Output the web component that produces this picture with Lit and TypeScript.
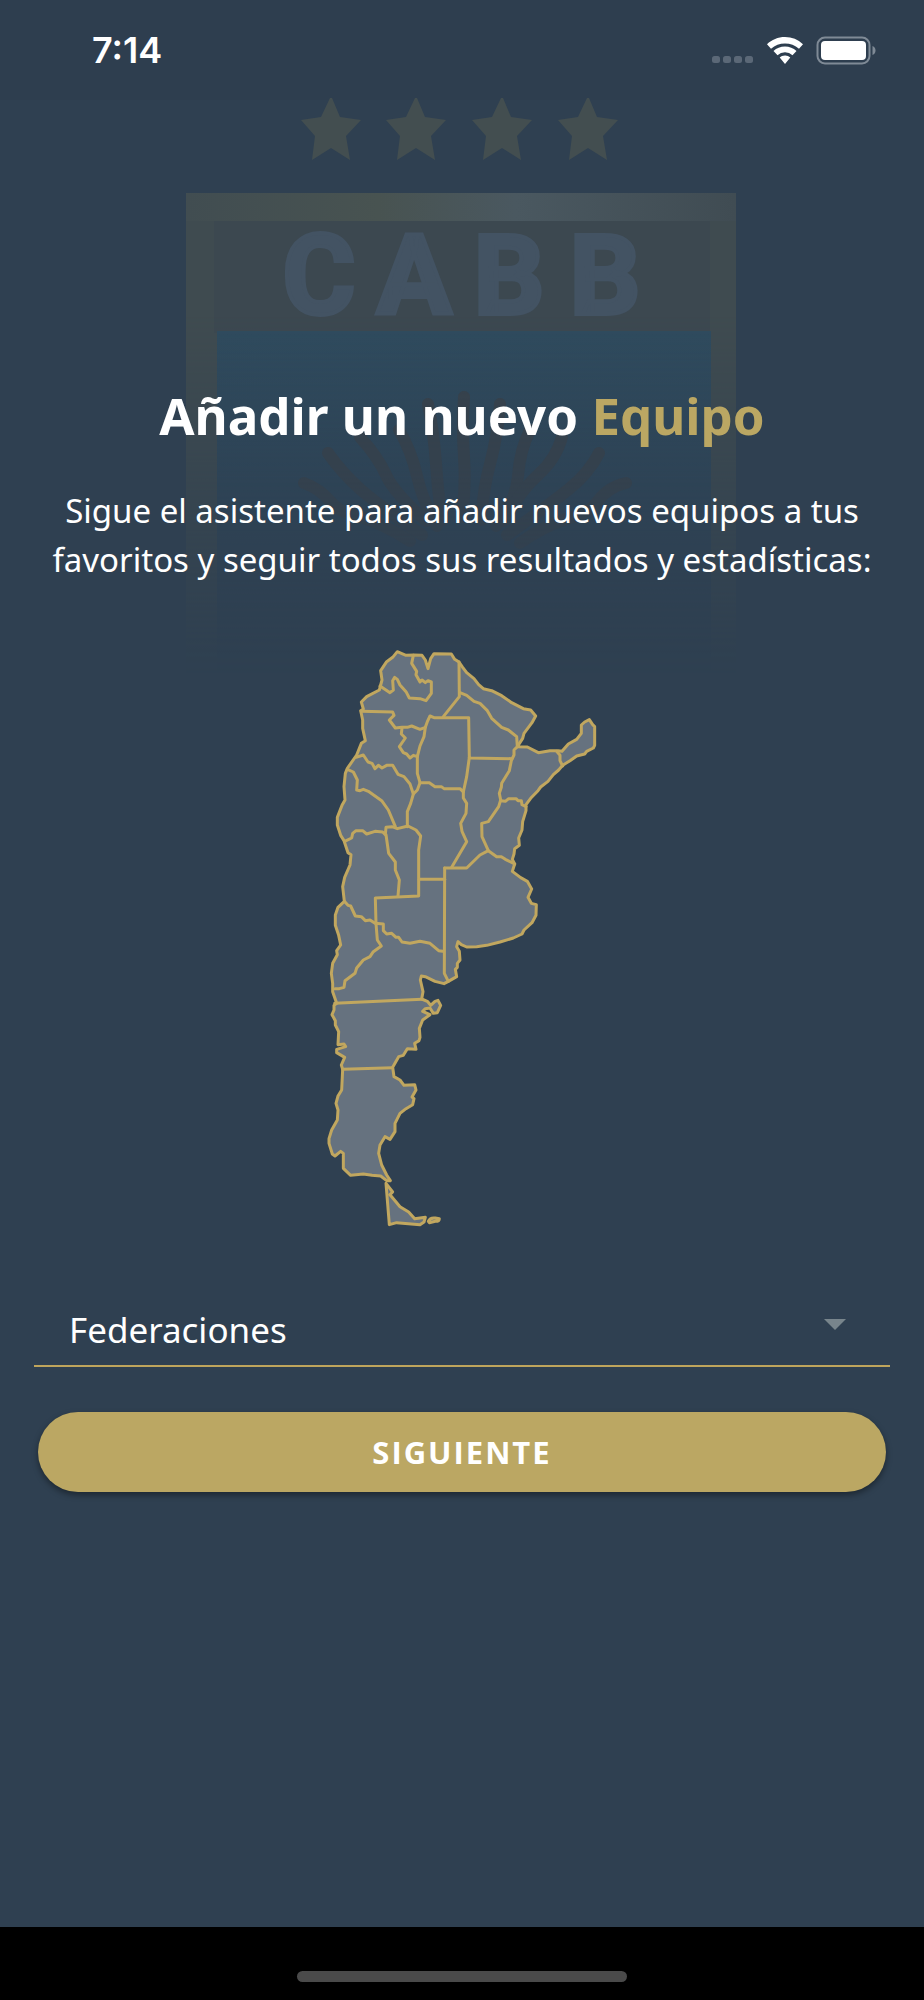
import { LitElement, html, css, svg } from "lit";
import { customElement, property } from "lit/decorators.js";

const STARS = [331, 416, 502, 588];

const RAYS = [
  "M304 483q16 6 26 18t30 16q22 6 50 24",
  "M328 453q14 20 32 36t62 46",
  "M360 437q18 20 26 38t40 46",
  "M399 430q12 20 18 46t20 50",
  "M428 404q6 30 8 60t6 56",
  "M464 397q-2 30 0 60t-2 60",
  "M500 404q-2 30-10 60t-8 56",
  "M530 430q-10 20-12 46t-22 50",
  "M562 437q-6 22-24 38t-34 46",
  "M599 453q-10 20-30 36t-62 46",
  "M626 483q-18 4-28 18t-32 18q-24 8-46 24",
];

const OUTLINE =
  "232,35 244,40 258,46 282,45 306,46 316,60 324,86 332,56 342,41 394,42 404,58 417,66 428,82 440,98 462,116 476,134 490,146 515,152 545,167 575,188 610,206 632,210 647,228 636,248 612,280 608,295 592,320 622,321 655,338 690,332 714,332 726,334 745,312 770,298 784,280 784,255 794,246 808,239 818,254 824,260 824,316 820,324 800,334 794,342 770,348 750,362 728,376 716,390 700,404 684,424 662,441 654,452 632,475 618,494 618,512 608,545 606,570 596,594 598,616 584,626 582,642 577,658 584,672 577,694 602,713 622,724 635,747 624,772 634,790 649,794 648,826 636,848 612,870 606,882 580,894 540,906 500,916 470,920 440,921 424,914 414,905 410,920 418,934 420,960 412,970 412,982 406,988 410,1010 385,1024 372,1031 345,1024 316,1010 304,1008 301,1020 309,1055 305,1077 322,1084 332,1096 345,1084 354,1081 362,1096 352,1118 340,1120 330,1104 316,1106 308,1114 330,1124 308,1140 298,1165 300,1192 297,1202 284,1210 288,1228 262,1226 250,1246 236,1250 218,1282 222,1310 240,1320 252,1336 284,1334 288,1350 276,1371 282,1376 278,1394 258,1406 240,1420 225,1450 225,1475 210,1498 195,1490 180,1515 176,1540 185,1575 200,1605 211,1622 200,1622 182,1608 156,1606 130,1602 92,1606 70,1585 70,1540 62,1534 45,1548 37,1542 27,1510 27,1496 35,1470 52,1440 54,1410 48,1390 54,1368 65,1350 68,1288 64,1275 74,1252 50,1238 50,1228 77,1220 72,1212 54,1214 56,1175 46,1155 46,1142 36,1124 42,1110 42,1096 50,1090 38,1055 38,1030 34,1000 38,970 52,944 50,932 62,915 56,886 46,856 46,825 54,802 73,784 68,740 74,712 90,675 93,644 84,638 72,602 62,586 52,555 52,532 66,496 75,480 72,440 76,400 82,385 110,345 124,310 136,302 128,265 128,240 122,212 130,207 124,186 140,170 178,150 186,120 182,92 200,65 218,52";

const BORDERS = [
  "280,46 275,70 290,94 288,104 300,126 306,120 316,128 324,122 334,126 334,160 318,182 300,176 268,174 258,155 240,135 232,118 224,112 218,122 220,150 210,158 180,138",
  "417,66 418,170 370,230",
  "420,158 440,166 462,184 480,190 502,212 515,235 545,262 565,270 590,290 592,320 582,330 582,345 574,362 568,392 545,430 544,442 538,460 542,480 536,500 505,545 485,550 486,590 505,632 480,645 440,684 374,684",
  "124,214 218,216 222,226 208,240 226,264 246,262 262,262 275,258 300,268 316,262 322,245 330,228 342,233 446,233 448,354 576,356",
  "246,264 244,282 256,294 238,320 250,338 260,342 270,354 280,346 292,350 300,318 312,290 316,262",
  "292,348 292,400 300,428 328,428 345,440 364,440 372,446 420,446 430,456 440,410 448,352",
  "300,428 292,450 280,462 272,490 262,515 262,560",
  "108,352 130,345 144,366 156,370 165,386 175,376 186,384 200,376 218,376 234,403 252,410 270,432 280,462",
  "82,388 100,396 112,420 110,450 120,452 130,448 145,454 185,482 205,510 226,560",
  "430,456 430,474 440,490 438,520 422,550 426,574 440,605 395,682",
  "542,482 556,484 566,476 588,476 594,482 604,482 606,494 618,500",
  "505,632 530,650 544,650 556,658 584,672",
  "710,334 720,346 720,362 728,378",
  "74,604 95,594 98,580 108,572 128,572 140,582 165,574 188,576 196,584 198,562 216,560 232,566 264,558 288,570 302,588 296,630 296,768 166,774 168,850 172,900 184,918 160,935 150,950 130,960 110,984 105,1000 75,1022 72,1042 58,1046 45,1046",
  "198,584 206,640 226,666 226,690 238,720 234,768",
  "298,718 374,718",
  "374,684 373,1000 385,1024",
  "73,784 84,796 92,798 106,828 124,830 136,842 150,840 165,850 190,852 190,872 200,882 215,880 228,892 236,892 246,906 270,910 300,904 330,910 356,932 368,934",
  "44,1090 306,1078",
  "68,1288 218,1283",
];

const TIERRA_DEL_FUEGO =
  "198,1630 218,1656 210,1664 240,1700 266,1716 284,1736 316,1732 312,1746 300,1754 230,1748 208,1754";

@customElement("status-bar")
class StatusBar extends LitElement {
  static styles = css`
    :host {
      display: flex;
      align-items: center;
      justify-content: space-between;
      height: 100px;
      padding: 0 48px 0 92px;
      background: #2e3e4f;
      box-sizing: border-box;
    }
    .time {
      font: 600 36px/40px Inter, sans-serif;
      color: #fff;
    }
    .icons {
      display: block;
    }
  `;
  render() {
    return html`
      <span class="time">7:14</span>
      <svg class="icons" width="166" height="40" viewBox="0 0 166 40" aria-hidden="true">
        <g fill="#5b6877">
          ${[2, 13, 24, 35].map((x) => svg`<rect x=${x} y="26" width="8" height="7" rx="2.5" />`)}
        </g>
        <g transform="translate(57 7)" fill="#fff">
          <path d="M18 0C11 0 4.800 2.700 0 7.200L4 11.800A21 21 0 0 1 32 11.800L36 7.200A26 26 0 0 0 18 0Z" />
          <path d="M18 9.500C13.500 9.500 9.500 11.200 6.500 14L10.500 18.200A11 11 0 0 1 25.500 18.200L29.500 14A17 17 0 0 0 18 9.500Z" />
          <path d="M18 18.500C15.800 18.500 14 19.300 12.700 20.500L18 27L23.300 20.500A7.500 7.500 0 0 0 18 18.500Z" />
        </g>
        <rect x="107.500" y="7.500" width="52" height="26" rx="7.500" fill="none" stroke="#7f8a96" stroke-width="2" />
        <rect x="111" y="11" width="45" height="19" rx="4" fill="#fff" />
        <path d="M162.500 16v9q3-1.200 3-4.500t-3-4.500Z" fill="#7f8a96" />
      </svg>
    `;
  }
}

@customElement("crest-backdrop")
class CrestBackdrop extends LitElement {
  static styles = css`
    :host {
      display: block;
    }
    .crest {
      display: block;
    }
    .letters {
      font: 700 112px Roboto, sans-serif;
      text-anchor: middle;
      fill: #435363;
      stroke: #435363;
      stroke-width: 4px;
    }
  `;
  render() {
    return html`
      <svg class="crest" width="924" height="600" viewBox="0 90 924 600" aria-hidden="true">
        <defs>
          <linearGradient id="band" x1="0" x2="1" y1="0" y2="0">
            <stop offset="0" stop-color="#414d51" />
            <stop offset="0.350" stop-color="#485351" />
            <stop offset="0.600" stop-color="#4a5860" />
            <stop offset="1" stop-color="#404c53" />
          </linearGradient>
          <linearGradient id="fade" x1="0" x2="0" y1="0" y2="1">
            <stop offset="0" stop-color="#fff" />
            <stop offset="0.250" stop-color="#fff" />
            <stop offset="0.500" stop-color="#aaa" />
            <stop offset="0.700" stop-color="#555" />
            <stop offset="0.900" stop-color="#111" />
            <stop offset="1" stop-color="#000" />
          </linearGradient>
          <linearGradient id="sky" x1="0" x2="0" y1="0" y2="1">
            <stop offset="0" stop-color="#2f4b5e" />
            <stop offset="0.450" stop-color="#2d465a" />
            <stop offset="1" stop-color="#2d4054" />
          </linearGradient>
          <mask id="down">
            <rect x="180" y="190" width="570" height="500" fill="url(#fade)" />
          </mask>
        </defs>
        <g fill="#434e50">
          ${STARS.map(
            (x) => svg`<path transform="translate(${x} 98)"
              d="M-1 0H1L9 19L30 22L15 38L19 62L0 50L-19 62L-16 38L-30 22L-10 19Z" />`
          )}
        </g>
        <g mask="url(#down)">
          <rect x="186" y="193" width="550" height="480" fill="#3f4b50" />
          <rect x="186" y="193" width="550" height="28" fill="url(#band)" />
          <rect x="214" y="221" width="496" height="112" fill="#3c4850" />
          <rect x="217" y="331" width="494" height="342" fill="url(#sky)" />
          <g fill="none" stroke="#38424b" stroke-width="12" stroke-linecap="round">
            ${RAYS.map((d) => svg`<path d=${d} />`)}
          </g>
        </g>
        <text class="letters" x="319 414 509 605" y="314">CABB</text>
      </svg>
    `;
  }
}

@customElement("province-map")
class ProvinceMap extends LitElement {
  static styles = css`
    :host {
      display: block;
    }
    .map {
      display: block;
      margin: 0 auto;
      stroke: #c1a75f;
      stroke-width: 9;
      stroke-linejoin: round;
      stroke-linecap: round;
    }
    .land {
      fill: #66727f;
    }
    .border {
      fill: none;
    }
  `;
  render() {
    return html`
      <svg class="map" width="284" height="590" viewBox="0 0 852 1770" role="img" aria-label="Mapa de Argentina">
        <polygon class="land" points=${OUTLINE} />
        ${BORDERS.map((points) => svg`<polyline class="border" points=${points} />`)}
        <polygon class="land" points=${TIERRA_DEL_FUEGO} />
        <path class="land" d="M325 1744Q330 1732 346 1734L358 1736Q358 1744 346 1744L328 1748Z" />
      </svg>
    `;
  }
}

@customElement("app-root")
class AppRoot extends LitElement {
  @property({ type: Array }) federations: string[] = ["Federaciones"];

  static styles = css`
    :host {
      display: flex;
      flex-direction: column;
      min-height: 100vh;
      background: #2f4051;
      color: #fff;
      font-family: "Noto Sans", "Open Sans", sans-serif;
    }
    .content {
      position: relative;
      flex: 1;
      display: flex;
      flex-direction: column;
      padding: 280px 34px 40px;
    }
    .backdrop {
      position: absolute;
      top: -10px;
      left: 50%;
      transform: translateX(-50%);
    }
    .intro,
    .map,
    .form {
      position: relative;
    }
    .intro {
      text-align: center;
    }
    .title {
      margin: 0;
      font-size: 51px;
      line-height: 70px;
      font-weight: 700;
    }
    .accent {
      color: #bba763;
    }
    .lead {
      margin: 36px 0 0;
      font-size: 33px;
      line-height: 49px;
    }
    .map {
      margin-top: 56px;
    }
    .form {
      display: flex;
      flex-direction: column;
      margin-top: 60px;
    }
    .field {
      position: relative;
      display: flex;
      border-bottom: 2px solid #bfa55c;
    }
    .select {
      appearance: none;
      flex: 1;
      height: 75px;
      padding: 4px 80px 0 35px;
      border: 0;
      border-radius: 0;
      background: none;
      color: #fff;
      font: 400 35px/48px "Noto Sans", "Open Sans", sans-serif;
    }
    .arrow {
      position: absolute;
      top: 29px;
      right: 43px;
      pointer-events: none;
    }
    .next {
      margin: 45px 4px 0;
      height: 80px;
      border: 0;
      border-radius: 40px;
      background: #bba763;
      box-shadow: 0 3px 6px rgba(0, 0, 0, 0.4);
      color: #fff;
      font: 700 31px/40px "Open Sans", "Noto Sans", sans-serif;
      letter-spacing: 2px;
    }
    .home {
      display: flex;
      justify-content: center;
      align-items: flex-end;
      height: 73px;
      padding-bottom: 18px;
      box-sizing: border-box;
      background: #000;
    }
    .handle {
      width: 330px;
      height: 11px;
      border-radius: 6px;
      background: #4a4a4a;
    }
  `;

  render() {
    return html`
      <status-bar></status-bar>
      <main class="content">
        <crest-backdrop class="backdrop"></crest-backdrop>
        <div class="intro">
          <h1 class="title">Añadir un nuevo <span class="accent">Equipo</span></h1>
          <p class="lead">
            Sigue el asistente para añadir nuevos equipos a tus favoritos y seguir todos sus resultados y estadísticas:
          </p>
        </div>
        <province-map class="map"></province-map>
        <form class="form" @submit=${(e: Event) => e.preventDefault()}>
          <div class="field">
            <select class="select" name="federation" aria-label="Federaciones">
              ${this.federations.map((name) => html`<option>${name}</option>`)}
            </select>
            <svg class="arrow" width="24" height="12" viewBox="0 0 24 12" aria-hidden="true">
              <path d="M1 0H23L12 11Z" fill="#78858c" />
            </svg>
          </div>
          <button class="next" type="submit">SIGUIENTE</button>
        </form>
      </main>
      <footer class="home"><div class="handle"></div></footer>
    `;
  }
}
